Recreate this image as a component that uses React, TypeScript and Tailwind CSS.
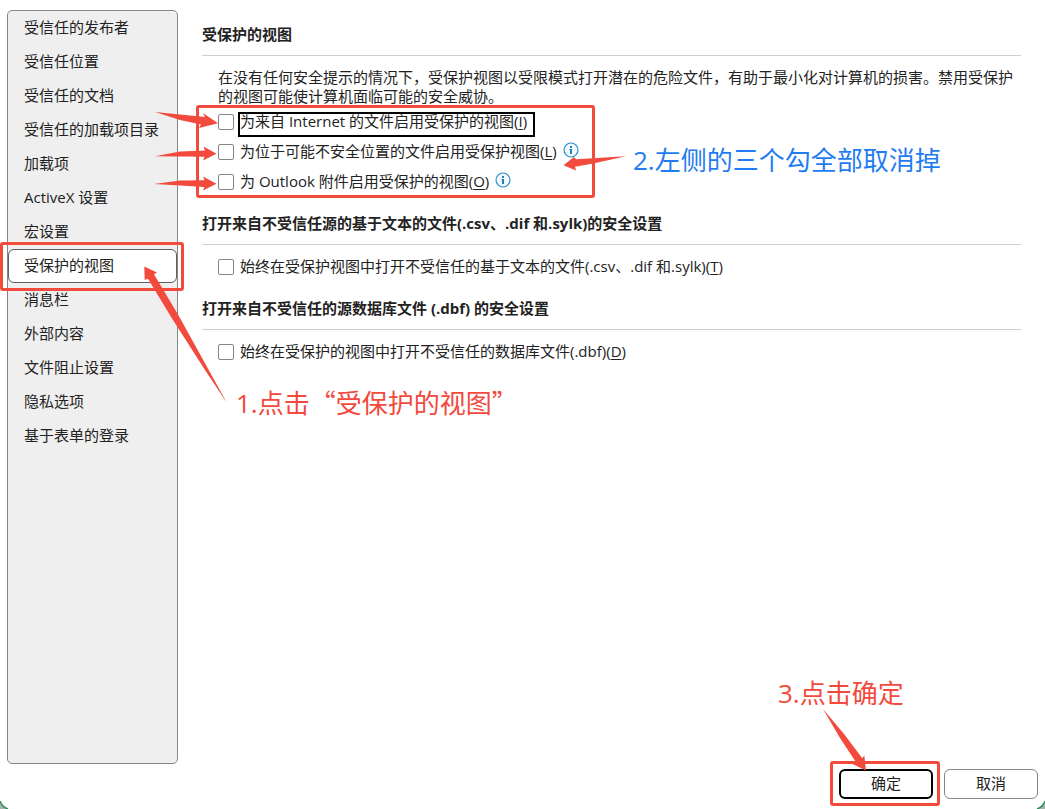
import React from "react";

const NAV_ITEMS = [
  "受信任的发布者",
  "受信任位置",
  "受信任的文档",
  "受信任的加载项目录",
  "加载项",
  "ActiveX 设置",
  "宏设置",
  "受保护的视图",
  "消息栏",
  "外部内容",
  "文件阻止设置",
  "隐私选项",
  "基于表单的登录",
];
const ACTIVE_ITEM = "受保护的视图";

const ARROWS = [
  "155,112 205,117 203,113 218,123.3 199,128 201,124.5 180,120",
  "155,156.3 180,151.5 205,150.5 203.5,146.5 216.5,153.7 203,160.5 204.5,156.7",
  "154,184 180,180.5 204.5,180.3 203,176.5 216.5,183.7 203,190.5 204.5,187 180,185.5",
  "626,156.3 576,159.3 574,157 563.5,165.3 576,170.5 575,166.7 593,163.5",
  "227,403 178,314.5 154,274.3 157,272.5 144.3,266.5 144.7,280 148,278.7 172,318.5 205,370",
  "823,709 844,734 862.3,758.3 864.3,755.5 866,770.5 852.5,764 855.7,761.7 840,738",
];

const InfoIcon = () => (
  <svg width="16" height="16" viewBox="0 0 16 16" className="shrink-0" aria-hidden="true">
    <circle cx="8" cy="8" r="7" fill="#f4f9fd" stroke="#2b8fd0" strokeWidth="1.2" />
    <rect x="7" y="4" width="2" height="2" fill="#1e7fc2" />
    <path d="M6.5 7H9v5H7V8h-.5z" fill="#1e7fc2" />
  </svg>
);

type OptionProps = {
  id: string;
  text: string;
  accessKey: string;
  info?: boolean;
  focused?: boolean;
};

const Option = ({ id, text, accessKey, info, focused }: OptionProps) => (
  <div className="flex h-[30px] items-center gap-[6px]">
    <input
      id={id}
      type="checkbox"
      className="size-4 shrink-0 appearance-none rounded-[2px] border border-[#868686] bg-white checked:bg-[#1e7fc2]"
    />
    <label htmlFor={id} className="relative pb-0.5 leading-5">
      {text}(<span className="underline underline-offset-2">{accessKey}</span>)
      {focused && (
        <span className="absolute -left-0.5 -right-2 top-px -bottom-1 border-2 border-black" />
      )}
    </label>
    {info && (
      <button type="button" aria-label="信息" className="mb-1">
        <InfoIcon />
      </button>
    )}
  </div>
);

const SectionTitle = ({ children }: { children: React.ReactNode }) => (
  <h2 className="border-b border-[#cfcfcf] pb-3 font-bold leading-[18px]">{children}</h2>
);

const App = () => {
  return (
    <div className="relative flex min-h-screen flex-col overflow-hidden bg-white px-[7px] py-[10px] font-['Open_Sans','Noto_Sans_CJK_SC',sans-serif] text-[15px] text-[#222222]">
      <div className="flex flex-1">
        <nav className="w-[171px] shrink-0 rounded-[5px] border border-[#868686] bg-[#efefef]">
          {NAV_ITEMS.map((item) => (
            <a
              key={item}
              href="#"
              className={
                item === ACTIVE_ITEM
                  ? "relative flex h-[34px] items-center rounded-md border border-[#5f5f5f] bg-white px-[15px] pb-0.5"
                  : "flex h-[34px] items-center border border-transparent px-[15px] pb-0.5"
              }
            >
              {item}
              {item === ACTIVE_ITEM && (
                <span className="absolute -left-[9px] -right-2 -top-2 -bottom-[9px] rounded-[3px] border-3 border-[#f24a3d]" />
              )}
            </a>
          ))}
        </nav>

        <main className="ml-6 mr-[17px] flex-1 pt-[15px]">
          <section className="mb-[17px]">
            <SectionTitle>受保护的视图</SectionTitle>
            <div className="pl-4">
              <p className="pb-px pt-3 leading-[19px]">
                在没有任何安全提示的情况下，受保护视图以受限模式打开潜在的危险文件，有助于最小化对计算机的损害。禁用受保护的视图可能使计算机面临可能的安全威协。
              </p>
              <div className="relative">
                <Option id="internet" text="为来自 Internet 的文件启用受保护的视图" accessKey="I" focused />
                <Option id="unsafe" text="为位于可能不安全位置的文件启用受保护视图" accessKey="L" info />
                <Option id="outlook" text="为 Outlook 附件启用受保护的视图" accessKey="O" info />
                <div className="pointer-events-none absolute -left-[22px] -top-0.5 -bottom-px w-[399px] rounded-[3px] border-3 border-[#f24a3d]" />
                <p className="absolute left-[415px] top-[35px] whitespace-nowrap text-[26px] leading-9 text-[#1f7cf2]">
                  2.左侧的三个勾全部取消掉
                </p>
              </div>
            </div>
          </section>

          <section className="mb-[17px]">
            <SectionTitle>打开来自不受信任源的基于文本的文件(.csv、.dif 和.sylk)的安全设置</SectionTitle>
            <div className="pl-4 pt-[7px]">
              <Option id="text-files" text="始终在受保护视图中打开不受信任的基于文本的文件(.csv、.dif 和.sylk)" accessKey="T" />
            </div>
          </section>

          <section>
            <SectionTitle>打开来自不受信任的源数据库文件 (.dbf) 的安全设置</SectionTitle>
            <div className="pl-4 pt-[7px]">
              <Option id="database" text="始终在受保护的视图中打开不受信任的数据库文件(.dbf)" accessKey="D" />
            </div>
            <p className="ml-[34px] mt-[17px] text-[26px] leading-9 text-[#f24a3d]">
              1.<span className="font-['Noto_Sans_CJK_SC',sans-serif]">点击“受保护的视图”</span>
            </p>
          </section>
        </main>
      </div>

      <footer className="mt-[5px] flex justify-end gap-[11px]">
        <div className="relative">
          <button type="button" className="h-[30px] w-[94px] rounded-md border-2 border-black bg-white pb-0.5">
            确定
          </button>
          <div className="pointer-events-none absolute -left-[9px] -right-[7px] -top-2 -bottom-[7px] rounded-[3px] border-3 border-[#f24a3d]" />
          <p className="absolute -left-[61px] bottom-[88px] whitespace-nowrap text-[26px] leading-9 text-[#f24a3d]">
            3.点击确定
          </p>
        </div>
        <button type="button" className="h-[30px] w-[94px] rounded-md border border-[#868686] bg-white pb-0.5">
          取消
        </button>
      </footer>

      <svg
        width="1045"
        height="809"
        viewBox="0 0 1045 809"
        className="pointer-events-none absolute left-0 top-0"
        aria-hidden="true"
      >
        {ARROWS.map((points) => (
          <polygon key={points} points={points} fill="#f24a3d" />
        ))}
        <path d="M0 801Q2 807 8 809H0zM1045 801Q1043 807 1037 809H1045z" fill="#a5b5ac" />
        <path d="M0 801Q2 807 8 809M1037 809Q1043 807 1045 801" fill="none" stroke="#2e9160" strokeWidth="1.5" />
      </svg>
    </div>
  );
};

export default App;
